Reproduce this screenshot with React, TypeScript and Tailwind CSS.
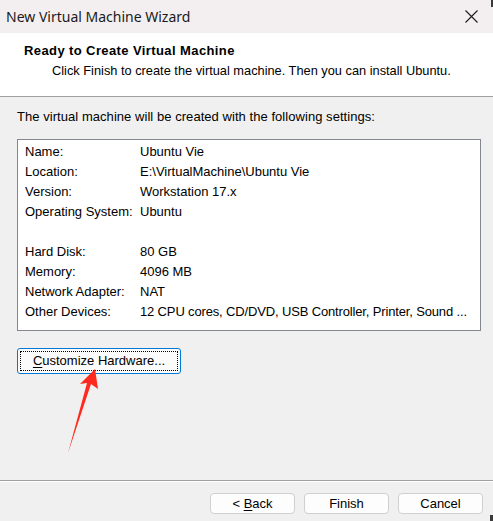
import React from "react";

const settings: [string, string][] = [
  ["Name:", "Ubuntu Vie"],
  ["Location:", "E:\\VirtualMachine\\Ubuntu Vie"],
  ["Version:", "Workstation 17.x"],
  ["Operating System:", "Ubuntu"],
  ["", ""],
  ["Hard Disk:", "80 GB"],
  ["Memory:", "4096 MB"],
  ["Network Adapter:", "NAT"],
  ["Other Devices:", "12 CPU cores, CD/DVD, USB Controller, Printer, Sound ..."],
];

function WizardButton({ children }: { children: React.ReactNode }) {
  return (
    <button className="flex h-[21px] w-[85px] items-center justify-center rounded-[4px] border border-[#d0d0d0] bg-[#fdfdfd] text-[13px] leading-none text-black">
      {children}
    </button>
  );
}

export default function App() {
  return (
    <div className="relative flex h-[521px] w-[493px] flex-col overflow-hidden bg-[#f0f0f0] font-['Liberation_Sans',Arial,sans-serif] text-[13px] text-black">
      {/* title bar */}
      <div className="flex h-[33px] items-center justify-between bg-[#f3eff0] pl-[6px] pr-[15px]">
        <span className="font-['Noto_Sans',sans-serif] text-[14px] text-[#1a1a1a]">New Virtual Machine Wizard</span>
        <svg width="13" height="13" viewBox="0 0 13 13" className="text-[#1a1a1a]">
          <path d="M0.5 0.5 L12.5 12.5 M12.5 0.5 L0.5 12.5" stroke="currentColor" strokeWidth="1.1" />
        </svg>
      </div>

      {/* header */}
      <div className="h-[64px] border-b border-[#a0a0a0] bg-white pt-[10px]">
        <p className="pl-[24px] text-[13px] font-bold leading-[16px] tracking-[0.4px]">Ready to Create Virtual Machine</p>
        <p className="mt-[4px] pl-[52px] text-[12.8px] leading-[16px]">Click Finish to create the virtual machine. Then you can install Ubuntu.</p>
      </div>

      {/* body */}
      <div className="flex-1 px-[17px] pt-[12px]">
        <p className="leading-[16px] tracking-[0.05px]">The virtual machine will be created with the following settings:</p>
        <div className="mt-[14px] h-[192px] w-[464px] border border-[#828790] bg-white px-[7px] pt-[2px]">
          {settings.map(([label, value], i) => (
            <div key={i} className="flex h-[20px] items-center whitespace-nowrap">
              <span className="w-[115px]">{label}</span>
              <span className={i === 8 ? "tracking-[-0.15px]" : ""}>{value}</span>
            </div>
          ))}
        </div>
        <button className="mt-[17px] flex h-[26px] w-[164px] rounded-[3px] border border-[#0078d7] bg-[#fbfbfb] p-[2px]">
          <span className="flex h-full w-full items-center justify-center border border-dotted border-black text-[13px]">
            <span className="underline underline-offset-2">C</span>ustomize Hardware...
          </span>
        </button>
      </div>

      {/* footer */}
      <div className="h-[41px] border-t border-[#a0a0a0]">
        <div className="flex h-full justify-end gap-[9px] border-t border-white pr-[10px] pt-[11px]">
          <WizardButton>
            &lt;&nbsp;<span className="underline underline-offset-2">B</span>ack
          </WizardButton>
          <WizardButton>Finish</WizardButton>
          <WizardButton>Cancel</WizardButton>
        </div>
      </div>

      {/* annotation arrow */}
      <svg className="pointer-events-none absolute left-0 top-0" width="493" height="521" viewBox="0 0 493 521">
        <polygon points="95,369 98,389 91,384 68,453 87,383 80,384" fill="#ff2a1f" />
      </svg>

      {/* window edge shadows */}
      <div className="absolute right-0 top-0 h-[7px] w-[2px] bg-[#3a3a3a]" />
      <div className="absolute bottom-0 right-0 h-[6px] w-[3px] bg-[#3a3a3a]" />
    </div>
  );
}
